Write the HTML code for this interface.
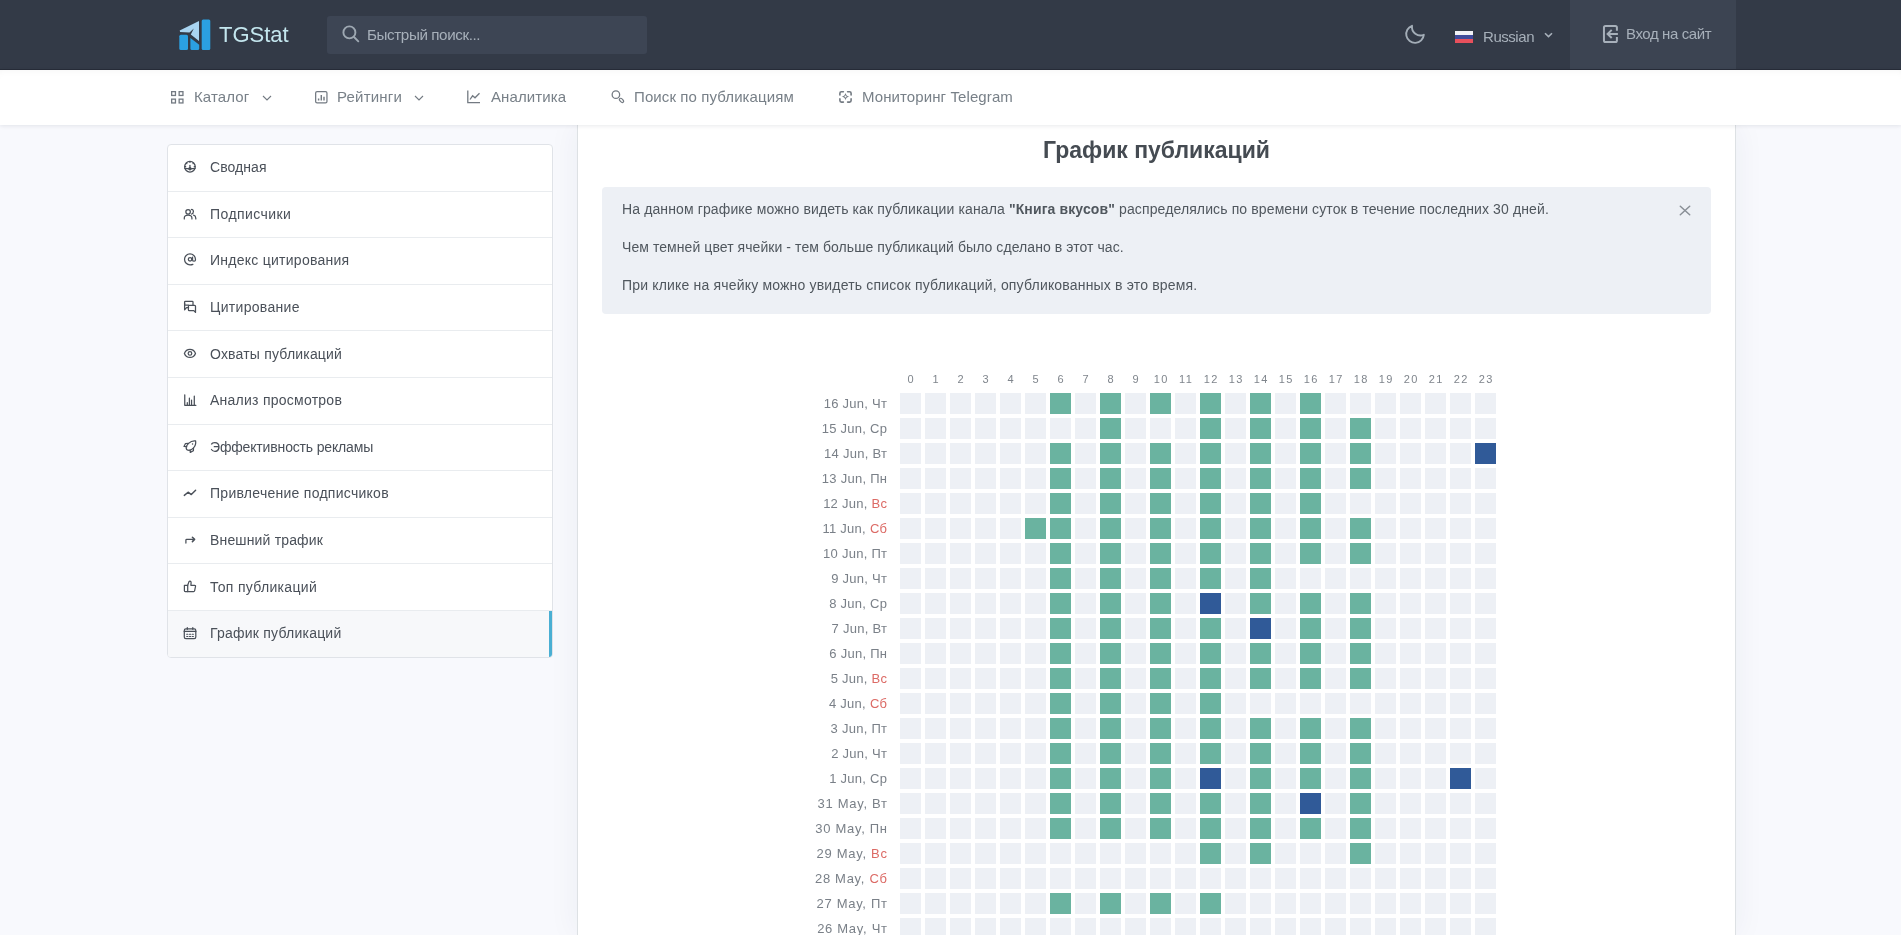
<!DOCTYPE html>
<html lang="ru">
<head>
<meta charset="utf-8">
<title>График публикаций — TGStat</title>
<style>
*{box-sizing:border-box;margin:0;padding:0}
html,body{width:1901px;height:935px;overflow:hidden}
body{will-change:transform}
body{background:#f8f9fd;font-family:"Liberation Sans",sans-serif;position:relative;color:#495057}
.hdr{position:absolute;left:0;top:0;width:1901px;height:70px;background:#333a47;border-bottom:1px solid #272d38}
.logo{position:absolute;left:175px;top:15px;width:40px;height:40px}
.brand{position:absolute;left:219px;top:22px;font-size:22px;color:#c4e6ee;letter-spacing:0px}
.search{position:absolute;left:327px;top:16px;width:320px;height:38px;background:#3d4554;border-radius:3px}
.search svg{position:absolute;left:15px;top:8.7px}
.search .ph{position:absolute;left:40px;top:10px;font-size:15.2px;color:#a7b0ba;letter-spacing:-0.4px}
.moon{position:absolute;left:1398px;top:18px}
.lang{position:absolute;left:1454px;top:30px}
.lang .fl{position:absolute;left:1px;top:1px;width:18px;height:12px}
.lang .tx{position:absolute;left:29px;top:-2px;font-size:15px;color:#a7b0ba;letter-spacing:-0.45px}
.lang svg.ch{position:absolute;left:89.5px;top:2px}
.login{position:absolute;left:1570px;top:0;width:166px;height:69px;background:#3c4452}
.login svg{position:absolute}
.login .tx{position:absolute;left:56px;top:25px;font-size:15px;color:#a7b0ba;letter-spacing:-0.4px}

.nav{position:absolute;left:0;top:70px;width:1901px;height:55px;background:#fff;z-index:2;box-shadow:0 1px 4px rgba(30,40,60,.10), inset 0 6px 8px -6px rgba(0,0,0,.05)}
.ni{position:absolute;top:18px;font-size:15px;color:#788088;white-space:nowrap;letter-spacing:0.1px}
.ni svg{position:absolute;top:2px}

.side{position:absolute;left:167px;top:144px;width:386px;height:514px;background:#fff;border:1px solid #e0e3e8;border-radius:4px;overflow:hidden}
.si{position:absolute;left:0;width:384px;height:46.6px;border-bottom:1px solid #e9ecef}
.si:last-child{border-bottom:none}
.si.active{background:#f7f8fa}
.si.active:after{content:"";position:absolute;right:0;top:0;bottom:0;width:3px;background:#4aafd3}
.sic{position:absolute;left:12px;display:block}
.st{position:absolute;left:42px;top:14.3px;font-size:14px;color:#4a5059;white-space:nowrap;letter-spacing:0.3px}

.main{position:absolute;left:577px;top:125px;width:1159px;height:810px;background:#fff;border-left:1px solid #dde1e4;border-right:1px solid #dde1e4;box-shadow:0 0 30px rgba(40,55,90,.06)}
.title{position:absolute;left:577px;top:137px;width:1159px;text-align:center;font-size:23px;font-weight:bold;color:#454b52;letter-spacing:0px}
.alert{position:absolute;left:602px;top:187px;width:1109px;height:127px;background:#edf0f5;border-radius:4px}
.al{position:absolute;left:20px;font-size:14px;color:#50575e;white-space:nowrap}
.close{position:absolute;left:1077px;top:17.5px}

.hh{position:absolute;top:372.5px;width:21px;text-align:center;font-size:11px;color:#7f858c;letter-spacing:1.5px;text-indent:1.5px;white-space:nowrap}
.rl{position:absolute;left:700px;width:187px;text-align:right;font-size:13px;color:#7a8088;line-height:21px;white-space:nowrap}
.red{color:#dc6a65}
.c{position:absolute;width:21px;height:21px;background:#edf0f5}
.c.g{background:#6ab3a0}
.c.b{background:#305a98}
</style>
</head>
<body>
<div class="hdr">
  <svg class="logo" viewBox="0 0 40 40">
    <path d="M4.7 15.6 L24 6 V26.1 L15.8 19.5 L18.8 13.5 L14.5 17.5 L5.1 17.1 Z" fill="#a9d4f1"/>
    <path d="M4.3 21.2 Q4.3 19.7 5.8 19.7 H11.5 Q13 19.7 13 21.2 V33.6 Q13 35.1 11.5 35.1 H5.8 Q4.3 35.1 4.3 33.6 Z" fill="#2ba0e2"/>
    <path d="M15.4 23.1 L24.2 29.7 V33.6 Q24.2 35.1 22.7 35.1 H16.9 Q15.4 35.1 15.4 33.6 Z" fill="#2ba0e2"/>
    <path d="M26.7 6 Q26.7 4.5 28.2 4.5 H33.8 Q35.3 4.5 35.3 6 V33.6 Q35.3 35.1 33.8 35.1 H28.2 Q26.7 35.1 26.7 33.6 Z" fill="#2ba0e2"/>
  </svg>
  <div class="brand">TGStat</div>
  <div class="search">
    <svg width="18" height="18" viewBox="0 0 18 18" fill="none" stroke="#9ea8b2" stroke-width="1.9" stroke-linecap="round"><circle cx="7.4" cy="7.4" r="6"/><path d="M12 12 L16.3 16.3"/></svg>
    <span class="ph">Быстрый поиск...</span>
  </div>
  <svg class="moon" width="34" height="34" viewBox="0 0 34 34" fill="none" stroke="#a3adb7" stroke-width="1.9" stroke-linejoin="round"><path d="M14 7.8 A8.8 8.8 0 1 0 25.8 16.8 A8.6 8.6 0 0 1 14 7.8 Z"/></svg>
  <div class="lang">
    <svg class="fl" viewBox="0 0 18 12" preserveAspectRatio="none"><rect width="18" height="4.1" fill="#f1f1f6"/><rect y="4" width="18" height="4.1" fill="#3f4a9a"/><rect y="8" width="18" height="4" fill="#e8505c"/></svg>
    <span class="tx">Russian</span>
    <svg class="ch" width="9" height="6" viewBox="0 0 9 6" fill="none" stroke="#a7b0ba" stroke-width="1.6"><path d="M1 1.2 L4.5 4.6 L8 1.2"/></svg>
  </div>
  <div class="login">
    <svg width="24" height="28" viewBox="0 0 24 28" fill="none" stroke="#a7b0ba" stroke-width="2" style="left:28px;top:20px"><path d="M18.9 10.8 V7.5 Q18.9 5.95 17.35 5.95 H7.5 Q5.95 5.95 5.95 7.5 V20.55 Q5.95 22.1 7.5 22.1 H17.35 Q18.9 22.1 18.9 20.55 V17.1"/><path d="M19.9 13.95 H9.8 M13.7 9.9 L9.6 13.95 L13.7 18"/></svg>
    <span class="tx">Вход на сайт</span>
  </div>
</div>

<div class="nav">
  <div class="ni" style="left:170px"><svg width="14" height="14" viewBox="0 0 14 14" fill="none" stroke="#737a82" stroke-width="1.3" style="left:1px;top:3px"><rect x="0.65" y="0.65" width="3.8" height="3.8"/><rect x="8.15" y="0.65" width="3.8" height="3.8"/><rect x="0.65" y="8.15" width="3.8" height="3.8"/><rect x="8.15" y="8.15" width="3.8" height="3.8"/></svg><span style="position:absolute;left:24px">Каталог</span><svg width="10" height="7" viewBox="0 0 10 7" fill="none" stroke="#737a82" stroke-width="1.1" style="left:91.5px;top:7px"><path d="M1 1 L5 5 L9 1"/></svg></div>
  <div class="ni" style="left:314px"><svg width="14" height="14" viewBox="0 0 14 14" fill="none" stroke="#737a82" stroke-width="1.25" style="left:0.5px;top:3px"><rect x="0.65" y="0.65" width="11.3" height="11.3" rx="1.4"/><path d="M3.6 9.5 V7.6 M6.3 9.5 V3.9 M9 9.5 V5.8" stroke-width="1.45"/></svg><span style="position:absolute;left:23px;letter-spacing:0.2px">Рейтинги</span><svg width="10" height="7" viewBox="0 0 10 7" fill="none" stroke="#737a82" stroke-width="1.1" style="left:100px;top:7px"><path d="M1 1 L5 5 L9 1"/></svg></div>
  <div class="ni" style="left:467px"><svg width="14" height="14" viewBox="0 0 14 14" fill="none" stroke="#737a82" stroke-width="1.3" style="left:0;top:2px"><path d="M0.8 0.5 V12.6 H13"/><path d="M3 9.5 L5.6 5.8 L8 7.8 L12.5 3.2"/></svg><span style="position:absolute;left:24px">Аналитика</span></div>
  <div class="ni" style="left:611px"><svg width="24" height="22" viewBox="0 0 24 22" fill="none" stroke="#737a82" stroke-width="1.3" style="left:-5px;top:-2px"><circle cx="9.9" cy="8.7" r="3.75"/><ellipse cx="15.5" cy="14.4" rx="2.5" ry="1.45" transform="rotate(45 15.5 14.4)" stroke-width="1.2"/></svg><span style="position:absolute;left:23px">Поиск по публикациям</span></div>
  <div class="ni" style="left:838px"><svg width="24" height="22" viewBox="0 0 24 22" fill="none" stroke="#737a82" stroke-width="1.6" stroke-linecap="round" style="left:-4px;top:-2px"><path d="M5.9 8.9 V7.2 Q5.9 5.7 7.4 5.7 H9.4 M13.6 5.7 H15.6 Q17.1 5.7 17.1 7.2 V8.9 M5.9 12.9 V14.6 Q5.9 16.1 7.4 16.1 H9.4 M13.6 16.1 H15.6 Q17.1 16.1 17.1 14.6 V12.9"/><path d="M11.5 6.9 Q12.1 9.9 15.3 10.6 Q12.1 11.3 11.5 14.35 Q10.9 11.3 7.6 10.6 Q10.9 9.9 11.5 6.9 Z" fill="#737a82" stroke="none"/><circle cx="11.5" cy="10.6" r="1" fill="#fff" stroke="none"/></svg><span style="position:absolute;left:24px">Мониторинг Telegram</span></div>
</div>

<div class="side">
<div class="si" style="top:0.0px"><svg class="sic" style="top:13px" width="20" height="20" viewBox="0 0 20 20" fill="none" stroke="#4a5059" stroke-width="1.25" stroke-linecap="round" stroke-linejoin="round"><circle cx="9.95" cy="8.77" r="5.3" stroke-width="1.3"/><path d="M9.95 3.7 V4.5 M6.4 5.2 L6.9 5.7 M13.5 5.2 L13 5.7 M4.9 8.5 H5.7 M14.2 8.5 H15" stroke-width="1.2"/><path d="M9.95 7.4 V10.2" stroke-width="1.3"/><path d="M4.9 10.4 Q9.95 11.3 15 10.4" stroke-width="1.3"/><circle cx="9.95" cy="10.7" r="1.05" fill="#4a5059"/></svg><span class="st" style="letter-spacing:0.07px">Сводная</span></div>
<div class="si" style="top:46.599999999999994px"><svg class="sic" style="top:12.4px" width="20" height="20" viewBox="0 0 20 20" fill="none" stroke="#4a5059" stroke-width="1.25" stroke-linecap="round" stroke-linejoin="round"><circle cx="8.1" cy="7.8" r="2.25"/><path d="M4.3 14.9 V14 Q4.3 11 8.1 11 Q11.9 11 11.9 14 V14.9"/><path d="M11.4 5.5 Q13.2 5.3 13.4 7.5 Q13.4 9.6 11.6 10"/><path d="M13.6 11.2 Q15.8 11.8 15.8 14.2 V14.9"/></svg><span class="st" style="letter-spacing:0.42px">Подписчики</span></div>
<div class="si" style="top:93.19999999999999px"><svg class="sic" style="top:11.8px" width="20" height="20" viewBox="0 0 20 20" fill="none" stroke="#4a5059" stroke-width="1.25" stroke-linecap="round" stroke-linejoin="round"><circle cx="10.05" cy="9.35" r="1.75"/><path d="M12.9 14.3 Q11.6 14.8 10.05 14.8 A5.45 5.45 0 1 1 15.45 9.35 V10 Q15.45 11.2 14.2 11.2 Q12.55 11.2 12.55 9.9 V7.2"/></svg><span class="st" style="letter-spacing:0.26px">Индекс цитирования</span></div>
<div class="si" style="top:139.8px"><svg class="sic" style="top:12.2px" width="20" height="20" viewBox="0 0 20 20" fill="none" stroke="#4a5059" stroke-width="1.25" stroke-linecap="round" stroke-linejoin="round"><path d="M8.6 8.2 H5.4 Q4.6 8.2 4.6 7 V5.1 Q4.6 4.3 5.4 4.3 H12.2 Q13 4.3 13 5.1 V8.2"/><path d="M4.6 6 V12.8 L6.5 10.6 H8.6"/><path d="M9.3 8.4 H14.6 Q15.5 8.4 15.5 9.3 V15.4 L13.8 13.6 H9.3 Q8.4 13.6 8.4 12.7 V9.3 Q8.4 8.4 9.3 8.4Z"/></svg><span class="st" style="letter-spacing:0.31px">Цитирование</span></div>
<div class="si" style="top:186.39999999999998px"><svg class="sic" style="top:12.6px" width="20" height="20" viewBox="0 0 20 20" fill="none" stroke="#4a5059" stroke-width="1.25" stroke-linecap="round" stroke-linejoin="round"><path d="M4.4 9.4 C5.6 6.3 7.6 5.4 9.97 5.4 S14.3 6.3 15.5 9.4 C14.3 12.5 12.3 13.4 9.97 13.4 S5.6 12.5 4.4 9.4Z"/><circle cx="9.97" cy="9.4" r="1.8"/></svg><span class="st" style="letter-spacing:0.19px">Охваты публикаций</span></div>
<div class="si" style="top:233.0px"><svg class="sic" style="top:12px" width="20" height="20" viewBox="0 0 20 20" fill="none" stroke="#4a5059" stroke-width="1.25" stroke-linecap="round" stroke-linejoin="round"><path d="M4.75 4.8 V15.35 H15.9"/><path d="M7.3 15 V12.7 M9.4 15 V8.1 M11.55 15 V10 M14.3 15 V6" stroke-width="1.25"/></svg><span class="st" style="letter-spacing:0.25px">Анализ просмотров</span></div>
<div class="si" style="top:279.6px"><svg class="sic" style="top:12.4px" width="20" height="20" viewBox="0 0 20 20" fill="none" stroke="#4a5059" stroke-width="1.25" stroke-linecap="round" stroke-linejoin="round"><path d="M6.6 12.4 C5.6 10.6 6.4 8.6 8.6 6.4 C11 4 13.4 3.6 15.6 3.9 C16 6.2 15.5 8.9 13.3 11.1 C11.1 13.4 8.5 13.9 6.6 12.4Z"/><path d="M6.8 9.7 L4 9.5 L5.5 6.5 L8.3 6.4"/><path d="M10.1 12.9 L10.3 15.4 L13.4 13.7 L13.5 11.1"/><circle cx="12.55" cy="6.9" r=".75" fill="#4a5059" stroke="none"/></svg><span class="st" style="letter-spacing:-0.16px">Эффективность рекламы</span></div>
<div class="si" style="top:326.2px"><svg class="sic" style="top:11.8px" width="20" height="20" viewBox="0 0 20 20" fill="none" stroke="#4a5059" stroke-width="1.25" stroke-linecap="round" stroke-linejoin="round"><path d="M4.3 12.4 L8.1 9.2 L11.3 11.55 L15.6 7.3" stroke-width="1.45"/></svg><span class="st" style="letter-spacing:0.27px">Привлечение подписчиков</span></div>
<div class="si" style="top:372.79999999999995px"><svg class="sic" style="top:12.2px" width="20" height="20" viewBox="0 0 20 20" fill="none" stroke="#4a5059" stroke-width="1.25" stroke-linecap="round" stroke-linejoin="round"><path d="M5.9 13.1 V10.2 Q5.9 9.4 6.7 9.4 H13.2"/><path d="M12.4 7.2 L14.6 9.4 L12.4 11.6" stroke-width="1.5"/></svg><span class="st" style="letter-spacing:0.16px">Внешний трафик</span></div>
<div class="si" style="top:419.4000000000001px"><svg class="sic" style="top:11.6px" width="20" height="20" viewBox="0 0 20 20" fill="none" stroke="#4a5059" stroke-width="1.25" stroke-linecap="round" stroke-linejoin="round"><path d="M4.4 9.3 H7.7 V15.5 H5.2 Q4.4 15.5 4.4 14.7Z"/><path d="M7.7 9.3 L9 5.6 Q9.4 5 10.1 5.1 Q11.2 5.4 11.1 6.6 L10.9 9.4 H14.7 Q15.7 9.5 15.5 10.5 L14.6 14.8 Q14.4 15.5 13.6 15.5 H7.7"/></svg><span class="st" style="letter-spacing:0.31px">Топ публикаций</span></div>
<div class="si active" style="top:466.0px"><svg class="sic" style="top:12px" width="20" height="20" viewBox="0 0 20 20" fill="none" stroke="#4a5059" stroke-width="1.25" stroke-linecap="round" stroke-linejoin="round"><rect x="4.3" y="5.9" width="11.5" height="9.8" rx="1.6"/><path d="M4.3 8.4 H15.8" stroke-width="1.4"/><path d="M7.3 4.7 V6.3 M12.8 4.7 V6.3" stroke-width="1.3"/><path d="M6.7 11.3 H7.9 M9.45 11.3 H10.65 M12.2 11.3 H13.4 M6.7 13.5 H7.9 M9.45 13.5 H10.65 M12.2 13.5 H13.4" stroke-width="1.1"/></svg><span class="st" style="letter-spacing:0.22px">График публикаций</span></div>
</div>

<div class="main"></div>
<div class="title">График публикаций</div>
<div class="alert">
  <div class="al" style="top:14px;letter-spacing:0.12px">На данном графике можно видеть как публикации канала <b>"Книга вкусов"</b> распределялись по времени суток в течение последних 30 дней.</div>
  <div class="al" style="top:52px;letter-spacing:0.07px">Чем темней цвет ячейки - тем больше публикаций было сделано в этот час.</div>
  <div class="al" style="top:90px;letter-spacing:0.18px">При клике на ячейку можно увидеть список публикаций, опубликованных в это время.</div>
  <svg class="close" width="12" height="11" viewBox="0 0 12 11" fill="none" stroke="#898f96" stroke-width="1.5" stroke-linecap="round"><path d="M1.3 1.3 L10.7 9.7 M10.7 1.3 L1.3 9.7"/></svg>
</div>

<div class="hh" style="left:900px">0</div>
<div class="hh" style="left:925px">1</div>
<div class="hh" style="left:950px">2</div>
<div class="hh" style="left:975px">3</div>
<div class="hh" style="left:1000px">4</div>
<div class="hh" style="left:1025px">5</div>
<div class="hh" style="left:1050px">6</div>
<div class="hh" style="left:1075px">7</div>
<div class="hh" style="left:1100px">8</div>
<div class="hh" style="left:1125px">9</div>
<div class="hh" style="left:1150px">10</div>
<div class="hh" style="left:1175px">11</div>
<div class="hh" style="left:1200px">12</div>
<div class="hh" style="left:1225px">13</div>
<div class="hh" style="left:1250px">14</div>
<div class="hh" style="left:1275px">15</div>
<div class="hh" style="left:1300px">16</div>
<div class="hh" style="left:1325px">17</div>
<div class="hh" style="left:1350px">18</div>
<div class="hh" style="left:1375px">19</div>
<div class="hh" style="left:1400px">20</div>
<div class="hh" style="left:1425px">21</div>
<div class="hh" style="left:1450px">22</div>
<div class="hh" style="left:1475px">23</div>
<div class="rl" style="top:393px;width:187.27px;letter-spacing:0.27px">16 Jun, Чт</div>
<div class="c" style="left:900px;top:393px"></div>
<div class="c" style="left:925px;top:393px"></div>
<div class="c" style="left:950px;top:393px"></div>
<div class="c" style="left:975px;top:393px"></div>
<div class="c" style="left:1000px;top:393px"></div>
<div class="c" style="left:1025px;top:393px"></div>
<div class="c g" style="left:1050px;top:393px"></div>
<div class="c" style="left:1075px;top:393px"></div>
<div class="c g" style="left:1100px;top:393px"></div>
<div class="c" style="left:1125px;top:393px"></div>
<div class="c g" style="left:1150px;top:393px"></div>
<div class="c" style="left:1175px;top:393px"></div>
<div class="c g" style="left:1200px;top:393px"></div>
<div class="c" style="left:1225px;top:393px"></div>
<div class="c g" style="left:1250px;top:393px"></div>
<div class="c" style="left:1275px;top:393px"></div>
<div class="c g" style="left:1300px;top:393px"></div>
<div class="c" style="left:1325px;top:393px"></div>
<div class="c" style="left:1350px;top:393px"></div>
<div class="c" style="left:1375px;top:393px"></div>
<div class="c" style="left:1400px;top:393px"></div>
<div class="c" style="left:1425px;top:393px"></div>
<div class="c" style="left:1450px;top:393px"></div>
<div class="c" style="left:1475px;top:393px"></div>
<div class="rl" style="top:418px;width:187.27px;letter-spacing:0.27px">15 Jun, Ср</div>
<div class="c" style="left:900px;top:418px"></div>
<div class="c" style="left:925px;top:418px"></div>
<div class="c" style="left:950px;top:418px"></div>
<div class="c" style="left:975px;top:418px"></div>
<div class="c" style="left:1000px;top:418px"></div>
<div class="c" style="left:1025px;top:418px"></div>
<div class="c" style="left:1050px;top:418px"></div>
<div class="c" style="left:1075px;top:418px"></div>
<div class="c g" style="left:1100px;top:418px"></div>
<div class="c" style="left:1125px;top:418px"></div>
<div class="c" style="left:1150px;top:418px"></div>
<div class="c" style="left:1175px;top:418px"></div>
<div class="c g" style="left:1200px;top:418px"></div>
<div class="c" style="left:1225px;top:418px"></div>
<div class="c g" style="left:1250px;top:418px"></div>
<div class="c" style="left:1275px;top:418px"></div>
<div class="c g" style="left:1300px;top:418px"></div>
<div class="c" style="left:1325px;top:418px"></div>
<div class="c g" style="left:1350px;top:418px"></div>
<div class="c" style="left:1375px;top:418px"></div>
<div class="c" style="left:1400px;top:418px"></div>
<div class="c" style="left:1425px;top:418px"></div>
<div class="c" style="left:1450px;top:418px"></div>
<div class="c" style="left:1475px;top:418px"></div>
<div class="rl" style="top:443px;width:187.27px;letter-spacing:0.27px">14 Jun, Вт</div>
<div class="c" style="left:900px;top:443px"></div>
<div class="c" style="left:925px;top:443px"></div>
<div class="c" style="left:950px;top:443px"></div>
<div class="c" style="left:975px;top:443px"></div>
<div class="c" style="left:1000px;top:443px"></div>
<div class="c" style="left:1025px;top:443px"></div>
<div class="c g" style="left:1050px;top:443px"></div>
<div class="c" style="left:1075px;top:443px"></div>
<div class="c g" style="left:1100px;top:443px"></div>
<div class="c" style="left:1125px;top:443px"></div>
<div class="c g" style="left:1150px;top:443px"></div>
<div class="c" style="left:1175px;top:443px"></div>
<div class="c g" style="left:1200px;top:443px"></div>
<div class="c" style="left:1225px;top:443px"></div>
<div class="c g" style="left:1250px;top:443px"></div>
<div class="c" style="left:1275px;top:443px"></div>
<div class="c g" style="left:1300px;top:443px"></div>
<div class="c" style="left:1325px;top:443px"></div>
<div class="c g" style="left:1350px;top:443px"></div>
<div class="c" style="left:1375px;top:443px"></div>
<div class="c" style="left:1400px;top:443px"></div>
<div class="c" style="left:1425px;top:443px"></div>
<div class="c" style="left:1450px;top:443px"></div>
<div class="c b" style="left:1475px;top:443px"></div>
<div class="rl" style="top:468px;width:187.27px;letter-spacing:0.27px">13 Jun, Пн</div>
<div class="c" style="left:900px;top:468px"></div>
<div class="c" style="left:925px;top:468px"></div>
<div class="c" style="left:950px;top:468px"></div>
<div class="c" style="left:975px;top:468px"></div>
<div class="c" style="left:1000px;top:468px"></div>
<div class="c" style="left:1025px;top:468px"></div>
<div class="c g" style="left:1050px;top:468px"></div>
<div class="c" style="left:1075px;top:468px"></div>
<div class="c g" style="left:1100px;top:468px"></div>
<div class="c" style="left:1125px;top:468px"></div>
<div class="c g" style="left:1150px;top:468px"></div>
<div class="c" style="left:1175px;top:468px"></div>
<div class="c g" style="left:1200px;top:468px"></div>
<div class="c" style="left:1225px;top:468px"></div>
<div class="c g" style="left:1250px;top:468px"></div>
<div class="c" style="left:1275px;top:468px"></div>
<div class="c g" style="left:1300px;top:468px"></div>
<div class="c" style="left:1325px;top:468px"></div>
<div class="c g" style="left:1350px;top:468px"></div>
<div class="c" style="left:1375px;top:468px"></div>
<div class="c" style="left:1400px;top:468px"></div>
<div class="c" style="left:1425px;top:468px"></div>
<div class="c" style="left:1450px;top:468px"></div>
<div class="c" style="left:1475px;top:468px"></div>
<div class="rl" style="top:493px;width:187.27px;letter-spacing:0.27px">12 Jun, <span class="red">Вс</span></div>
<div class="c" style="left:900px;top:493px"></div>
<div class="c" style="left:925px;top:493px"></div>
<div class="c" style="left:950px;top:493px"></div>
<div class="c" style="left:975px;top:493px"></div>
<div class="c" style="left:1000px;top:493px"></div>
<div class="c" style="left:1025px;top:493px"></div>
<div class="c g" style="left:1050px;top:493px"></div>
<div class="c" style="left:1075px;top:493px"></div>
<div class="c g" style="left:1100px;top:493px"></div>
<div class="c" style="left:1125px;top:493px"></div>
<div class="c g" style="left:1150px;top:493px"></div>
<div class="c" style="left:1175px;top:493px"></div>
<div class="c g" style="left:1200px;top:493px"></div>
<div class="c" style="left:1225px;top:493px"></div>
<div class="c g" style="left:1250px;top:493px"></div>
<div class="c" style="left:1275px;top:493px"></div>
<div class="c g" style="left:1300px;top:493px"></div>
<div class="c" style="left:1325px;top:493px"></div>
<div class="c" style="left:1350px;top:493px"></div>
<div class="c" style="left:1375px;top:493px"></div>
<div class="c" style="left:1400px;top:493px"></div>
<div class="c" style="left:1425px;top:493px"></div>
<div class="c" style="left:1450px;top:493px"></div>
<div class="c" style="left:1475px;top:493px"></div>
<div class="rl" style="top:518px;width:187.27px;letter-spacing:0.27px">11 Jun, <span class="red">Сб</span></div>
<div class="c" style="left:900px;top:518px"></div>
<div class="c" style="left:925px;top:518px"></div>
<div class="c" style="left:950px;top:518px"></div>
<div class="c" style="left:975px;top:518px"></div>
<div class="c" style="left:1000px;top:518px"></div>
<div class="c g" style="left:1025px;top:518px"></div>
<div class="c g" style="left:1050px;top:518px"></div>
<div class="c" style="left:1075px;top:518px"></div>
<div class="c g" style="left:1100px;top:518px"></div>
<div class="c" style="left:1125px;top:518px"></div>
<div class="c g" style="left:1150px;top:518px"></div>
<div class="c" style="left:1175px;top:518px"></div>
<div class="c g" style="left:1200px;top:518px"></div>
<div class="c" style="left:1225px;top:518px"></div>
<div class="c g" style="left:1250px;top:518px"></div>
<div class="c" style="left:1275px;top:518px"></div>
<div class="c g" style="left:1300px;top:518px"></div>
<div class="c" style="left:1325px;top:518px"></div>
<div class="c g" style="left:1350px;top:518px"></div>
<div class="c" style="left:1375px;top:518px"></div>
<div class="c" style="left:1400px;top:518px"></div>
<div class="c" style="left:1425px;top:518px"></div>
<div class="c" style="left:1450px;top:518px"></div>
<div class="c" style="left:1475px;top:518px"></div>
<div class="rl" style="top:543px;width:187.27px;letter-spacing:0.27px">10 Jun, Пт</div>
<div class="c" style="left:900px;top:543px"></div>
<div class="c" style="left:925px;top:543px"></div>
<div class="c" style="left:950px;top:543px"></div>
<div class="c" style="left:975px;top:543px"></div>
<div class="c" style="left:1000px;top:543px"></div>
<div class="c" style="left:1025px;top:543px"></div>
<div class="c g" style="left:1050px;top:543px"></div>
<div class="c" style="left:1075px;top:543px"></div>
<div class="c g" style="left:1100px;top:543px"></div>
<div class="c" style="left:1125px;top:543px"></div>
<div class="c g" style="left:1150px;top:543px"></div>
<div class="c" style="left:1175px;top:543px"></div>
<div class="c g" style="left:1200px;top:543px"></div>
<div class="c" style="left:1225px;top:543px"></div>
<div class="c g" style="left:1250px;top:543px"></div>
<div class="c" style="left:1275px;top:543px"></div>
<div class="c g" style="left:1300px;top:543px"></div>
<div class="c" style="left:1325px;top:543px"></div>
<div class="c g" style="left:1350px;top:543px"></div>
<div class="c" style="left:1375px;top:543px"></div>
<div class="c" style="left:1400px;top:543px"></div>
<div class="c" style="left:1425px;top:543px"></div>
<div class="c" style="left:1450px;top:543px"></div>
<div class="c" style="left:1475px;top:543px"></div>
<div class="rl" style="top:568px;width:187.27px;letter-spacing:0.27px">9 Jun, Чт</div>
<div class="c" style="left:900px;top:568px"></div>
<div class="c" style="left:925px;top:568px"></div>
<div class="c" style="left:950px;top:568px"></div>
<div class="c" style="left:975px;top:568px"></div>
<div class="c" style="left:1000px;top:568px"></div>
<div class="c" style="left:1025px;top:568px"></div>
<div class="c g" style="left:1050px;top:568px"></div>
<div class="c" style="left:1075px;top:568px"></div>
<div class="c g" style="left:1100px;top:568px"></div>
<div class="c" style="left:1125px;top:568px"></div>
<div class="c g" style="left:1150px;top:568px"></div>
<div class="c" style="left:1175px;top:568px"></div>
<div class="c g" style="left:1200px;top:568px"></div>
<div class="c" style="left:1225px;top:568px"></div>
<div class="c g" style="left:1250px;top:568px"></div>
<div class="c" style="left:1275px;top:568px"></div>
<div class="c" style="left:1300px;top:568px"></div>
<div class="c" style="left:1325px;top:568px"></div>
<div class="c" style="left:1350px;top:568px"></div>
<div class="c" style="left:1375px;top:568px"></div>
<div class="c" style="left:1400px;top:568px"></div>
<div class="c" style="left:1425px;top:568px"></div>
<div class="c" style="left:1450px;top:568px"></div>
<div class="c" style="left:1475px;top:568px"></div>
<div class="rl" style="top:593px;width:187.27px;letter-spacing:0.27px">8 Jun, Ср</div>
<div class="c" style="left:900px;top:593px"></div>
<div class="c" style="left:925px;top:593px"></div>
<div class="c" style="left:950px;top:593px"></div>
<div class="c" style="left:975px;top:593px"></div>
<div class="c" style="left:1000px;top:593px"></div>
<div class="c" style="left:1025px;top:593px"></div>
<div class="c g" style="left:1050px;top:593px"></div>
<div class="c" style="left:1075px;top:593px"></div>
<div class="c g" style="left:1100px;top:593px"></div>
<div class="c" style="left:1125px;top:593px"></div>
<div class="c g" style="left:1150px;top:593px"></div>
<div class="c" style="left:1175px;top:593px"></div>
<div class="c b" style="left:1200px;top:593px"></div>
<div class="c" style="left:1225px;top:593px"></div>
<div class="c g" style="left:1250px;top:593px"></div>
<div class="c" style="left:1275px;top:593px"></div>
<div class="c g" style="left:1300px;top:593px"></div>
<div class="c" style="left:1325px;top:593px"></div>
<div class="c g" style="left:1350px;top:593px"></div>
<div class="c" style="left:1375px;top:593px"></div>
<div class="c" style="left:1400px;top:593px"></div>
<div class="c" style="left:1425px;top:593px"></div>
<div class="c" style="left:1450px;top:593px"></div>
<div class="c" style="left:1475px;top:593px"></div>
<div class="rl" style="top:618px;width:187.27px;letter-spacing:0.27px">7 Jun, Вт</div>
<div class="c" style="left:900px;top:618px"></div>
<div class="c" style="left:925px;top:618px"></div>
<div class="c" style="left:950px;top:618px"></div>
<div class="c" style="left:975px;top:618px"></div>
<div class="c" style="left:1000px;top:618px"></div>
<div class="c" style="left:1025px;top:618px"></div>
<div class="c g" style="left:1050px;top:618px"></div>
<div class="c" style="left:1075px;top:618px"></div>
<div class="c g" style="left:1100px;top:618px"></div>
<div class="c" style="left:1125px;top:618px"></div>
<div class="c g" style="left:1150px;top:618px"></div>
<div class="c" style="left:1175px;top:618px"></div>
<div class="c g" style="left:1200px;top:618px"></div>
<div class="c" style="left:1225px;top:618px"></div>
<div class="c b" style="left:1250px;top:618px"></div>
<div class="c" style="left:1275px;top:618px"></div>
<div class="c g" style="left:1300px;top:618px"></div>
<div class="c" style="left:1325px;top:618px"></div>
<div class="c g" style="left:1350px;top:618px"></div>
<div class="c" style="left:1375px;top:618px"></div>
<div class="c" style="left:1400px;top:618px"></div>
<div class="c" style="left:1425px;top:618px"></div>
<div class="c" style="left:1450px;top:618px"></div>
<div class="c" style="left:1475px;top:618px"></div>
<div class="rl" style="top:643px;width:187.27px;letter-spacing:0.27px">6 Jun, Пн</div>
<div class="c" style="left:900px;top:643px"></div>
<div class="c" style="left:925px;top:643px"></div>
<div class="c" style="left:950px;top:643px"></div>
<div class="c" style="left:975px;top:643px"></div>
<div class="c" style="left:1000px;top:643px"></div>
<div class="c" style="left:1025px;top:643px"></div>
<div class="c g" style="left:1050px;top:643px"></div>
<div class="c" style="left:1075px;top:643px"></div>
<div class="c g" style="left:1100px;top:643px"></div>
<div class="c" style="left:1125px;top:643px"></div>
<div class="c g" style="left:1150px;top:643px"></div>
<div class="c" style="left:1175px;top:643px"></div>
<div class="c g" style="left:1200px;top:643px"></div>
<div class="c" style="left:1225px;top:643px"></div>
<div class="c g" style="left:1250px;top:643px"></div>
<div class="c" style="left:1275px;top:643px"></div>
<div class="c g" style="left:1300px;top:643px"></div>
<div class="c" style="left:1325px;top:643px"></div>
<div class="c g" style="left:1350px;top:643px"></div>
<div class="c" style="left:1375px;top:643px"></div>
<div class="c" style="left:1400px;top:643px"></div>
<div class="c" style="left:1425px;top:643px"></div>
<div class="c" style="left:1450px;top:643px"></div>
<div class="c" style="left:1475px;top:643px"></div>
<div class="rl" style="top:668px;width:187.27px;letter-spacing:0.27px">5 Jun, <span class="red">Вс</span></div>
<div class="c" style="left:900px;top:668px"></div>
<div class="c" style="left:925px;top:668px"></div>
<div class="c" style="left:950px;top:668px"></div>
<div class="c" style="left:975px;top:668px"></div>
<div class="c" style="left:1000px;top:668px"></div>
<div class="c" style="left:1025px;top:668px"></div>
<div class="c g" style="left:1050px;top:668px"></div>
<div class="c" style="left:1075px;top:668px"></div>
<div class="c g" style="left:1100px;top:668px"></div>
<div class="c" style="left:1125px;top:668px"></div>
<div class="c g" style="left:1150px;top:668px"></div>
<div class="c" style="left:1175px;top:668px"></div>
<div class="c g" style="left:1200px;top:668px"></div>
<div class="c" style="left:1225px;top:668px"></div>
<div class="c g" style="left:1250px;top:668px"></div>
<div class="c" style="left:1275px;top:668px"></div>
<div class="c g" style="left:1300px;top:668px"></div>
<div class="c" style="left:1325px;top:668px"></div>
<div class="c g" style="left:1350px;top:668px"></div>
<div class="c" style="left:1375px;top:668px"></div>
<div class="c" style="left:1400px;top:668px"></div>
<div class="c" style="left:1425px;top:668px"></div>
<div class="c" style="left:1450px;top:668px"></div>
<div class="c" style="left:1475px;top:668px"></div>
<div class="rl" style="top:693px;width:187.27px;letter-spacing:0.27px">4 Jun, <span class="red">Сб</span></div>
<div class="c" style="left:900px;top:693px"></div>
<div class="c" style="left:925px;top:693px"></div>
<div class="c" style="left:950px;top:693px"></div>
<div class="c" style="left:975px;top:693px"></div>
<div class="c" style="left:1000px;top:693px"></div>
<div class="c" style="left:1025px;top:693px"></div>
<div class="c g" style="left:1050px;top:693px"></div>
<div class="c" style="left:1075px;top:693px"></div>
<div class="c g" style="left:1100px;top:693px"></div>
<div class="c" style="left:1125px;top:693px"></div>
<div class="c g" style="left:1150px;top:693px"></div>
<div class="c" style="left:1175px;top:693px"></div>
<div class="c g" style="left:1200px;top:693px"></div>
<div class="c" style="left:1225px;top:693px"></div>
<div class="c" style="left:1250px;top:693px"></div>
<div class="c" style="left:1275px;top:693px"></div>
<div class="c" style="left:1300px;top:693px"></div>
<div class="c" style="left:1325px;top:693px"></div>
<div class="c" style="left:1350px;top:693px"></div>
<div class="c" style="left:1375px;top:693px"></div>
<div class="c" style="left:1400px;top:693px"></div>
<div class="c" style="left:1425px;top:693px"></div>
<div class="c" style="left:1450px;top:693px"></div>
<div class="c" style="left:1475px;top:693px"></div>
<div class="rl" style="top:718px;width:187.27px;letter-spacing:0.27px">3 Jun, Пт</div>
<div class="c" style="left:900px;top:718px"></div>
<div class="c" style="left:925px;top:718px"></div>
<div class="c" style="left:950px;top:718px"></div>
<div class="c" style="left:975px;top:718px"></div>
<div class="c" style="left:1000px;top:718px"></div>
<div class="c" style="left:1025px;top:718px"></div>
<div class="c g" style="left:1050px;top:718px"></div>
<div class="c" style="left:1075px;top:718px"></div>
<div class="c g" style="left:1100px;top:718px"></div>
<div class="c" style="left:1125px;top:718px"></div>
<div class="c g" style="left:1150px;top:718px"></div>
<div class="c" style="left:1175px;top:718px"></div>
<div class="c g" style="left:1200px;top:718px"></div>
<div class="c" style="left:1225px;top:718px"></div>
<div class="c g" style="left:1250px;top:718px"></div>
<div class="c" style="left:1275px;top:718px"></div>
<div class="c g" style="left:1300px;top:718px"></div>
<div class="c" style="left:1325px;top:718px"></div>
<div class="c g" style="left:1350px;top:718px"></div>
<div class="c" style="left:1375px;top:718px"></div>
<div class="c" style="left:1400px;top:718px"></div>
<div class="c" style="left:1425px;top:718px"></div>
<div class="c" style="left:1450px;top:718px"></div>
<div class="c" style="left:1475px;top:718px"></div>
<div class="rl" style="top:743px;width:187.27px;letter-spacing:0.27px">2 Jun, Чт</div>
<div class="c" style="left:900px;top:743px"></div>
<div class="c" style="left:925px;top:743px"></div>
<div class="c" style="left:950px;top:743px"></div>
<div class="c" style="left:975px;top:743px"></div>
<div class="c" style="left:1000px;top:743px"></div>
<div class="c" style="left:1025px;top:743px"></div>
<div class="c g" style="left:1050px;top:743px"></div>
<div class="c" style="left:1075px;top:743px"></div>
<div class="c g" style="left:1100px;top:743px"></div>
<div class="c" style="left:1125px;top:743px"></div>
<div class="c g" style="left:1150px;top:743px"></div>
<div class="c" style="left:1175px;top:743px"></div>
<div class="c g" style="left:1200px;top:743px"></div>
<div class="c" style="left:1225px;top:743px"></div>
<div class="c g" style="left:1250px;top:743px"></div>
<div class="c" style="left:1275px;top:743px"></div>
<div class="c g" style="left:1300px;top:743px"></div>
<div class="c" style="left:1325px;top:743px"></div>
<div class="c g" style="left:1350px;top:743px"></div>
<div class="c" style="left:1375px;top:743px"></div>
<div class="c" style="left:1400px;top:743px"></div>
<div class="c" style="left:1425px;top:743px"></div>
<div class="c" style="left:1450px;top:743px"></div>
<div class="c" style="left:1475px;top:743px"></div>
<div class="rl" style="top:768px;width:187.27px;letter-spacing:0.27px">1 Jun, Ср</div>
<div class="c" style="left:900px;top:768px"></div>
<div class="c" style="left:925px;top:768px"></div>
<div class="c" style="left:950px;top:768px"></div>
<div class="c" style="left:975px;top:768px"></div>
<div class="c" style="left:1000px;top:768px"></div>
<div class="c" style="left:1025px;top:768px"></div>
<div class="c g" style="left:1050px;top:768px"></div>
<div class="c" style="left:1075px;top:768px"></div>
<div class="c g" style="left:1100px;top:768px"></div>
<div class="c" style="left:1125px;top:768px"></div>
<div class="c g" style="left:1150px;top:768px"></div>
<div class="c" style="left:1175px;top:768px"></div>
<div class="c b" style="left:1200px;top:768px"></div>
<div class="c" style="left:1225px;top:768px"></div>
<div class="c g" style="left:1250px;top:768px"></div>
<div class="c" style="left:1275px;top:768px"></div>
<div class="c g" style="left:1300px;top:768px"></div>
<div class="c" style="left:1325px;top:768px"></div>
<div class="c g" style="left:1350px;top:768px"></div>
<div class="c" style="left:1375px;top:768px"></div>
<div class="c" style="left:1400px;top:768px"></div>
<div class="c" style="left:1425px;top:768px"></div>
<div class="c b" style="left:1450px;top:768px"></div>
<div class="c" style="left:1475px;top:768px"></div>
<div class="rl" style="top:793px;width:187.7px;letter-spacing:0.7px">31 May, Вт</div>
<div class="c" style="left:900px;top:793px"></div>
<div class="c" style="left:925px;top:793px"></div>
<div class="c" style="left:950px;top:793px"></div>
<div class="c" style="left:975px;top:793px"></div>
<div class="c" style="left:1000px;top:793px"></div>
<div class="c" style="left:1025px;top:793px"></div>
<div class="c g" style="left:1050px;top:793px"></div>
<div class="c" style="left:1075px;top:793px"></div>
<div class="c g" style="left:1100px;top:793px"></div>
<div class="c" style="left:1125px;top:793px"></div>
<div class="c g" style="left:1150px;top:793px"></div>
<div class="c" style="left:1175px;top:793px"></div>
<div class="c g" style="left:1200px;top:793px"></div>
<div class="c" style="left:1225px;top:793px"></div>
<div class="c g" style="left:1250px;top:793px"></div>
<div class="c" style="left:1275px;top:793px"></div>
<div class="c b" style="left:1300px;top:793px"></div>
<div class="c" style="left:1325px;top:793px"></div>
<div class="c g" style="left:1350px;top:793px"></div>
<div class="c" style="left:1375px;top:793px"></div>
<div class="c" style="left:1400px;top:793px"></div>
<div class="c" style="left:1425px;top:793px"></div>
<div class="c" style="left:1450px;top:793px"></div>
<div class="c" style="left:1475px;top:793px"></div>
<div class="rl" style="top:818px;width:187.7px;letter-spacing:0.7px">30 May, Пн</div>
<div class="c" style="left:900px;top:818px"></div>
<div class="c" style="left:925px;top:818px"></div>
<div class="c" style="left:950px;top:818px"></div>
<div class="c" style="left:975px;top:818px"></div>
<div class="c" style="left:1000px;top:818px"></div>
<div class="c" style="left:1025px;top:818px"></div>
<div class="c g" style="left:1050px;top:818px"></div>
<div class="c" style="left:1075px;top:818px"></div>
<div class="c g" style="left:1100px;top:818px"></div>
<div class="c" style="left:1125px;top:818px"></div>
<div class="c g" style="left:1150px;top:818px"></div>
<div class="c" style="left:1175px;top:818px"></div>
<div class="c g" style="left:1200px;top:818px"></div>
<div class="c" style="left:1225px;top:818px"></div>
<div class="c g" style="left:1250px;top:818px"></div>
<div class="c" style="left:1275px;top:818px"></div>
<div class="c g" style="left:1300px;top:818px"></div>
<div class="c" style="left:1325px;top:818px"></div>
<div class="c g" style="left:1350px;top:818px"></div>
<div class="c" style="left:1375px;top:818px"></div>
<div class="c" style="left:1400px;top:818px"></div>
<div class="c" style="left:1425px;top:818px"></div>
<div class="c" style="left:1450px;top:818px"></div>
<div class="c" style="left:1475px;top:818px"></div>
<div class="rl" style="top:843px;width:187.7px;letter-spacing:0.7px">29 May, <span class="red">Вс</span></div>
<div class="c" style="left:900px;top:843px"></div>
<div class="c" style="left:925px;top:843px"></div>
<div class="c" style="left:950px;top:843px"></div>
<div class="c" style="left:975px;top:843px"></div>
<div class="c" style="left:1000px;top:843px"></div>
<div class="c" style="left:1025px;top:843px"></div>
<div class="c" style="left:1050px;top:843px"></div>
<div class="c" style="left:1075px;top:843px"></div>
<div class="c" style="left:1100px;top:843px"></div>
<div class="c" style="left:1125px;top:843px"></div>
<div class="c" style="left:1150px;top:843px"></div>
<div class="c" style="left:1175px;top:843px"></div>
<div class="c g" style="left:1200px;top:843px"></div>
<div class="c" style="left:1225px;top:843px"></div>
<div class="c g" style="left:1250px;top:843px"></div>
<div class="c" style="left:1275px;top:843px"></div>
<div class="c" style="left:1300px;top:843px"></div>
<div class="c" style="left:1325px;top:843px"></div>
<div class="c g" style="left:1350px;top:843px"></div>
<div class="c" style="left:1375px;top:843px"></div>
<div class="c" style="left:1400px;top:843px"></div>
<div class="c" style="left:1425px;top:843px"></div>
<div class="c" style="left:1450px;top:843px"></div>
<div class="c" style="left:1475px;top:843px"></div>
<div class="rl" style="top:868px;width:187.7px;letter-spacing:0.7px">28 May, <span class="red">Сб</span></div>
<div class="c" style="left:900px;top:868px"></div>
<div class="c" style="left:925px;top:868px"></div>
<div class="c" style="left:950px;top:868px"></div>
<div class="c" style="left:975px;top:868px"></div>
<div class="c" style="left:1000px;top:868px"></div>
<div class="c" style="left:1025px;top:868px"></div>
<div class="c" style="left:1050px;top:868px"></div>
<div class="c" style="left:1075px;top:868px"></div>
<div class="c" style="left:1100px;top:868px"></div>
<div class="c" style="left:1125px;top:868px"></div>
<div class="c" style="left:1150px;top:868px"></div>
<div class="c" style="left:1175px;top:868px"></div>
<div class="c" style="left:1200px;top:868px"></div>
<div class="c" style="left:1225px;top:868px"></div>
<div class="c" style="left:1250px;top:868px"></div>
<div class="c" style="left:1275px;top:868px"></div>
<div class="c" style="left:1300px;top:868px"></div>
<div class="c" style="left:1325px;top:868px"></div>
<div class="c" style="left:1350px;top:868px"></div>
<div class="c" style="left:1375px;top:868px"></div>
<div class="c" style="left:1400px;top:868px"></div>
<div class="c" style="left:1425px;top:868px"></div>
<div class="c" style="left:1450px;top:868px"></div>
<div class="c" style="left:1475px;top:868px"></div>
<div class="rl" style="top:893px;width:187.7px;letter-spacing:0.7px">27 May, Пт</div>
<div class="c" style="left:900px;top:893px"></div>
<div class="c" style="left:925px;top:893px"></div>
<div class="c" style="left:950px;top:893px"></div>
<div class="c" style="left:975px;top:893px"></div>
<div class="c" style="left:1000px;top:893px"></div>
<div class="c" style="left:1025px;top:893px"></div>
<div class="c g" style="left:1050px;top:893px"></div>
<div class="c" style="left:1075px;top:893px"></div>
<div class="c g" style="left:1100px;top:893px"></div>
<div class="c" style="left:1125px;top:893px"></div>
<div class="c g" style="left:1150px;top:893px"></div>
<div class="c" style="left:1175px;top:893px"></div>
<div class="c g" style="left:1200px;top:893px"></div>
<div class="c" style="left:1225px;top:893px"></div>
<div class="c" style="left:1250px;top:893px"></div>
<div class="c" style="left:1275px;top:893px"></div>
<div class="c" style="left:1300px;top:893px"></div>
<div class="c" style="left:1325px;top:893px"></div>
<div class="c" style="left:1350px;top:893px"></div>
<div class="c" style="left:1375px;top:893px"></div>
<div class="c" style="left:1400px;top:893px"></div>
<div class="c" style="left:1425px;top:893px"></div>
<div class="c" style="left:1450px;top:893px"></div>
<div class="c" style="left:1475px;top:893px"></div>
<div class="rl" style="top:918px;width:187.7px;letter-spacing:0.7px">26 May, Чт</div>
<div class="c" style="left:900px;top:918px"></div>
<div class="c" style="left:925px;top:918px"></div>
<div class="c" style="left:950px;top:918px"></div>
<div class="c" style="left:975px;top:918px"></div>
<div class="c" style="left:1000px;top:918px"></div>
<div class="c" style="left:1025px;top:918px"></div>
<div class="c" style="left:1050px;top:918px"></div>
<div class="c" style="left:1075px;top:918px"></div>
<div class="c" style="left:1100px;top:918px"></div>
<div class="c" style="left:1125px;top:918px"></div>
<div class="c" style="left:1150px;top:918px"></div>
<div class="c" style="left:1175px;top:918px"></div>
<div class="c" style="left:1200px;top:918px"></div>
<div class="c" style="left:1225px;top:918px"></div>
<div class="c" style="left:1250px;top:918px"></div>
<div class="c" style="left:1275px;top:918px"></div>
<div class="c" style="left:1300px;top:918px"></div>
<div class="c" style="left:1325px;top:918px"></div>
<div class="c" style="left:1350px;top:918px"></div>
<div class="c" style="left:1375px;top:918px"></div>
<div class="c" style="left:1400px;top:918px"></div>
<div class="c" style="left:1425px;top:918px"></div>
<div class="c" style="left:1450px;top:918px"></div>
<div class="c" style="left:1475px;top:918px"></div>
<div class="rl" style="top:943px;width:187.7px;letter-spacing:0.7px">25 May, Ср</div>
<div class="c" style="left:900px;top:943px"></div>
<div class="c" style="left:925px;top:943px"></div>
<div class="c" style="left:950px;top:943px"></div>
<div class="c" style="left:975px;top:943px"></div>
<div class="c" style="left:1000px;top:943px"></div>
<div class="c" style="left:1025px;top:943px"></div>
<div class="c" style="left:1050px;top:943px"></div>
<div class="c" style="left:1075px;top:943px"></div>
<div class="c" style="left:1100px;top:943px"></div>
<div class="c" style="left:1125px;top:943px"></div>
<div class="c" style="left:1150px;top:943px"></div>
<div class="c" style="left:1175px;top:943px"></div>
<div class="c" style="left:1200px;top:943px"></div>
<div class="c" style="left:1225px;top:943px"></div>
<div class="c" style="left:1250px;top:943px"></div>
<div class="c" style="left:1275px;top:943px"></div>
<div class="c" style="left:1300px;top:943px"></div>
<div class="c" style="left:1325px;top:943px"></div>
<div class="c" style="left:1350px;top:943px"></div>
<div class="c" style="left:1375px;top:943px"></div>
<div class="c" style="left:1400px;top:943px"></div>
<div class="c" style="left:1425px;top:943px"></div>
<div class="c" style="left:1450px;top:943px"></div>
<div class="c" style="left:1475px;top:943px"></div>
</body>
</html>
